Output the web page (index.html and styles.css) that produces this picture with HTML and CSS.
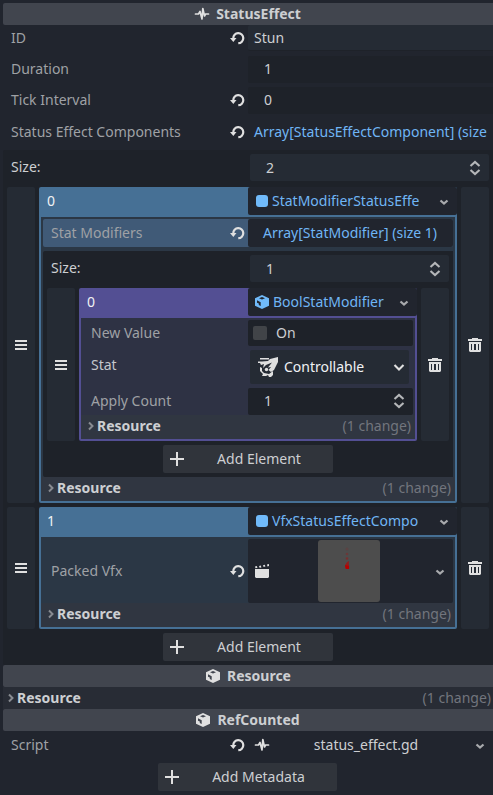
FILE: index.html
```html
<!DOCTYPE html>
<html lang="en">
<head>
<meta charset="utf-8">
<title>Inspector</title>
<link rel="stylesheet" href="styles.css">
</head>
<body>
<svg class="defs" aria-hidden="true">
  <symbol id="pulse" viewBox="0 0 16 16"><path d="M1.500 8H4.500L6 5.500L8 13L8.800 2.500L10.500 10L11.500 8H14.500" fill="none" stroke="currentColor" stroke-width="1.700" stroke-linejoin="round" stroke-linecap="round"/></symbol>
  <symbol id="revert" viewBox="0 0 16 16"><path d="M4.300 8.500A5 5 0 1 1 9.300 13.200" fill="none" stroke="currentColor" stroke-width="2.200"/><path d="M1 8H7.500L4.300 12Z" fill="currentColor"/></symbol>
  <symbol id="updown" viewBox="0 0 16 16"><path d="M3.500 6L8 2L12.500 6M3.500 10L8 14L12.500 10" fill="none" stroke="currentColor" stroke-width="2.100"/></symbol>
  <symbol id="down" viewBox="0 0 16 16"><path d="M4.500 7.500L8 10.500L11.500 7.500" fill="none" stroke="currentColor" stroke-width="2.300"/></symbol>
  <symbol id="bigdown" viewBox="0 0 16 16"><path d="M3.500 6L8 10.500L12.500 6" fill="none" stroke="currentColor" stroke-width="2.100"/></symbol>
  <symbol id="right" viewBox="0 0 8 12"><path d="M2 2.500L5.500 6L2 9.500" fill="none" stroke="currentColor" stroke-width="2"/></symbol>
  <symbol id="grip" viewBox="0 0 16 16"><path d="M2 3H14V5H2ZM2 7H14V9H2ZM2 11H14V13H2Z" fill="currentColor"/></symbol>
  <symbol id="trash" viewBox="0 0 16 16"><path fill="currentColor" fill-rule="evenodd" d="M5 1H11V2H15V4H1V2H5ZM2 5H14V14L13 15H3L2 14ZM4 7V13H5V7ZM7 7V13H9V7ZM11 7V13H12V7Z"/></symbol>
  <symbol id="cube" viewBox="0 0 16 16"><path fill="currentColor" fill-rule="evenodd" d="M8 1L15 4.300V11.700L8 15L1 11.700V4.300ZM8 3L5 4.300L8 5.600L11 4.300ZM3 6.300V8.700L4.800 9.600V11L6.700 12V8.200Z"/></symbol>
  <symbol id="clap" viewBox="0 0 16 16"><path fill="currentColor" d="M1 6H15V14L14 15H2L1 14ZM1 3.500L2.800 3L3.500 4.800L1.500 5.300ZM5 3L6.800 2.600L7.400 4.400L5.600 4.800ZM9 2.200L10.800 1.800L11.400 3.600L9.600 4ZM13 1.500L15 1V3L13.500 3.500Z"/></symbol>
  <symbol id="plus" viewBox="0 0 16 16"><path d="M8 1V15M1 8H15" stroke="currentColor" stroke-width="2"/></symbol>
  <symbol id="control" viewBox="0 0 20 20"><path fill="currentColor" d="M2 1H11V2.600H2ZM0 4.500H4L10 4L12 2L20 0V5L18 9L16 13L13 15L10.500 13L13 10L10 10.500L14 5.500L8 8L5 11L6 7L3 8L2 6H0Z"/><circle cx="8.500" cy="12.500" r="1.700" fill="currentColor"/><path fill="currentColor" d="M2 10L4 11V14L6 16L11 17L15 14V18L13 20H11L10 18L8 19H4L5 17L2 14Z"/></symbol>
</svg>
<main class="inspector">
  <div class="category script-class"><svg class="icon"><use href="#pulse"/></svg>StatusEffect</div>
  <div class="row id-row"><label>ID</label><svg class="icon revert"><use href="#revert"/></svg><div class="value text-field">Stun</div></div>
  <div class="row number-row"><label>Duration</label><div class="value number">1</div></div>
  <div class="row number-row"><label>Tick Interval</label><svg class="icon revert"><use href="#revert"/></svg><div class="value number">0</div></div>
  <div class="row array-row"><label>Status Effect Components</label><svg class="icon revert"><use href="#revert"/></svg><div class="value link">Array[StatusEffectComponent] (size</div></div>

  <section class="array">
    <div class="size"><label>Size:</label><div class="spin">2<svg class="icon"><use href="#updown"/></svg></div></div>
    <div class="element">
      <div class="side"><svg class="icon"><use href="#grip"/></svg></div>
      <div class="item">
        <div class="item-head"><span class="index">0</span><div class="picker"><i class="square"></i>StatModifierStatusEffe<svg class="icon"><use href="#down"/></svg></div></div>
        <div class="item-body">
          <div class="sub-row"><label>Stat Modifiers</label><svg class="icon revert"><use href="#revert"/></svg><div class="array-button">Array[StatModifier] (size 1)</div></div>
          <section class="array nested">
            <div class="size"><label>Size:</label><div class="spin">1<svg class="icon"><use href="#updown"/></svg></div></div>
            <div class="element">
              <div class="side"><svg class="icon"><use href="#grip"/></svg></div>
              <div class="item violet">
                <div class="item-head"><span class="index">0</span><div class="picker"><svg class="icon type"><use href="#cube"/></svg>BoolStatModifier<svg class="icon"><use href="#down"/></svg></div></div>
                <div class="item-body">
                  <div class="prop"><label>New Value</label><div class="check"><i></i>On</div></div>
                  <div class="prop stat"><label>Stat</label><div class="select"><svg class="control"><use href="#control"/></svg>Controllable<svg class="icon"><use href="#bigdown"/></svg></div></div>
                  <div class="prop count"><label>Apply Count</label><div class="spin">1<svg class="icon"><use href="#updown"/></svg></div></div>
                  <div class="fold"><svg><use href="#right"/></svg><b>Resource</b><span>(1 change)</span></div>
                </div>
              </div>
              <div class="side"><svg class="icon"><use href="#trash"/></svg></div>
            </div>
            <div class="add"><svg class="icon"><use href="#plus"/></svg><span>Add Element</span></div>
          </section>
          <div class="fold"><svg><use href="#right"/></svg><b>Resource</b><span>(1 change)</span></div>
        </div>
      </div>
      <div class="side"><svg class="icon"><use href="#trash"/></svg></div>
    </div>
    <div class="element">
      <div class="side"><svg class="icon"><use href="#grip"/></svg></div>
      <div class="item">
        <div class="item-head"><span class="index">1</span><div class="picker"><i class="square"></i>VfxStatusEffectCompo<svg class="icon"><use href="#down"/></svg></div></div>
        <div class="item-body">
          <div class="packed"><label>Packed Vfx</label><svg class="icon revert"><use href="#revert"/></svg>
            <div class="scene"><svg class="icon"><use href="#clap"/></svg>
              <svg class="preview" viewBox="0 0 62 62"><rect width="62" height="62" rx="3" fill="#4d4d4d"/><g fill="#941c1c"><circle cx="29" cy="9" r="1.500" opacity=".2"/><circle cx="29" cy="14" r="1.300" opacity=".4"/><circle cx="29" cy="18.500" r="1.300" opacity=".6"/><path d="M31 21C30 24 32 27 31 29L28 29C26 27 27 23 31 21Z"/></g><path d="M27 25L31 26V29H28Z" fill="#b80000"/></svg>
              <svg class="icon"><use href="#down"/></svg></div></div>
          <div class="fold"><svg><use href="#right"/></svg><b>Resource</b><span>(1 change)</span></div>
        </div>
      </div>
      <div class="side"><svg class="icon"><use href="#trash"/></svg></div>
    </div>
    <div class="add"><svg class="icon"><use href="#plus"/></svg><span>Add Element</span></div>
  </section>

  <div class="category"><svg class="icon"><use href="#cube"/></svg>Resource</div>
  <div class="fold root"><svg><use href="#right"/></svg><b>Resource</b><span>(1 change)</span></div>
  <div class="category script-class"><svg class="icon"><use href="#cube"/></svg>RefCounted</div>
  <div class="row script"><label>Script</label><svg class="icon revert"><use href="#revert"/></svg><div class="value script-value"><svg class="icon"><use href="#pulse"/></svg><span>status_effect.gd</span><svg class="icon dim"><use href="#down"/></svg></div></div>
  <div class="add metadata"><svg class="icon"><use href="#plus"/></svg><span>Add Metadata</span></div>
</main>
</body>
</html>
```

FILE: styles.css
```css
* { box-sizing: border-box; }
body {
  margin: 0;
  width: 493px;
  height: 795px;
  overflow: hidden;
  background: #21252e;
  color: #cdcfd2;
  font: 14px/20px "Noto Sans", sans-serif;
  white-space: nowrap;
}
.defs { position: absolute; width: 0; height: 0; }
.inspector { padding: 3px 0 0 3px; }
.icon { width: 16px; height: 16px; flex: none; color: #e0e0e0; }
label { flex: 1; color: #9fa1a5; }
.revert { margin-right: 3px; }

.category {
  height: 22px;
  display: flex;
  align-items: center;
  justify-content: center;
  gap: 6px;
  background: #41454e;
  border-radius: 2px 0 0 2px;
  font-weight: 700;
}
.script-class { padding-right: 1px; }
.row { display: flex; align-items: center; height: 27px; margin-bottom: 4px; padding-left: 8px; }
.value { width: 245px; height: 27px; padding-left: 6px; line-height: 26px; border-radius: 2px 0 0 2px; }
.id-row { height: 26px; margin-bottom: 5px; }
.number-row label, .size label, .count label { padding-bottom: 1px; line-height: 20px; height: 22px; }
.number-row .icon { margin-bottom: 1px; }
.text-field { height: 26px; background: #252b34; border-bottom: 1px solid #1e2229; }
.number { background: #1e2229; padding-left: 16px; }
.array-row { height: 28px; }
.link { color: #70b5f5; }

.array { background: #1e2229; border-radius: 2px 0 0 2px; padding: 4px; }
.size { height: 27px; margin-bottom: 6px; display: flex; align-items: center; padding-left: 4px; }
.size label { color: #cdcfd2; }
.spin {
  width: 239px;
  height: 27px;
  display: flex;
  align-items: center;
  justify-content: space-between;
  padding: 0 6px 0 16px;
  background: #252b34;
  border-radius: 2px;
}
.spin .icon { color: #b5b7b9; }
.element { display: flex; gap: 4px; margin-bottom: 4px; }
.side { width: 28px; flex: none; display: flex; align-items: center; justify-content: center; background: #252b34; border-radius: 2px; }
.item { --accent: #467095; --body: #2b3745; width: 418px; background: var(--accent); padding-bottom: 2px; border-radius: 2px; }
.item-head { height: 30px; display: flex; }
.index { flex: 1; padding-left: 8px; line-height: 28px; color: #f0f2f4; }
.picker { width: 209px; height: 28px; display: flex; align-items: center; padding: 0 5px 0 8px; background: #21252e; color: #70b5f5; border-radius: 2px; }
.picker > .icon:last-child { margin-left: auto; color: #a8aaad; }
.square { width: 12px; height: 12px; margin-right: 4px; border-radius: 3px; background: #70bafa; }
.item-body { margin: 0 2px; padding-top: 2px; background: var(--body); }
.sub-row { height: 28px; display: flex; align-items: center; margin: 0 2px 4px; padding-left: 8px; background: #405a77; border-radius: 2px; }
.array-button { width: 205px; height: 28px; line-height: 28px; padding-left: 15px; background: #21252e; color: #70b5f5; border-radius: 2px; }
.add {
  width: 170px;
  height: 28px;
  margin: 0 auto;
  display: flex;
  align-items: center;
  padding-left: 6px;
  background: #30343b;
  border-radius: 2px;
}
.add span { flex: 1; text-align: center; }
.fold { height: 24px; display: flex; align-items: center; padding: 0 4px 2px 6px; background: #303641; }
.fold svg { width: 8px; height: 12px; margin-right: 2px; color: #888b91; }
.fold span { margin-left: auto; color: #72757d; }

.nested { margin: 0 2px; }
.nested > .size .spin { width: 199px; }
.violet { --accent: #534f93; --body: #2e3244; width: 338px; }
.violet .picker { width: 169px; padding-left: 6px; }
.picker .type { margin-right: 3px; color: #70bafa; }
.prop { height: 26px; display: flex; align-items: center; margin: 0 2px 4px 10px; }
.check { width: 165px; height: 26px; display: flex; align-items: center; padding-left: 5px; background: #1e2229; border-radius: 2px; }
.check i { width: 14px; height: 14px; margin-right: 9px; border-radius: 2px; background: #414448; }
.stat { height: 34px; }
.stat label { color: #c5c7cc; padding-bottom: 4px; }
.select { width: 159px; height: 34px; margin-right: 4px; display: flex; align-items: center; padding: 0 2px 0 8px; background: #252b34; color: #f0f2f4; border-radius: 2px; }
.select .icon { margin-left: auto; }
.control { width: 20px; height: 20px; margin-right: 6px; color: #e0e0e0; }
.count { height: 27px; margin-bottom: 0; }
.count .spin { width: 165px; padding-bottom: 1px; background: #1e2229; }

.packed { height: 64px; display: flex; align-items: center; margin: 0 2px; padding-left: 8px; }
.scene { width: 205px; height: 64px; display: flex; align-items: center; padding: 0 5px 0 6px; background: #21252e; border-radius: 2px; }
.preview { width: 62px; height: 62px; margin: 0 auto 0 48px; }
.scene .icon:last-child { color: #a8aaad; }

.root { height: 22px; background: #282c35; padding: 0 2px 0 4px; }
.script { height: 28px; }
.script-value { height: 28px; display: flex; align-items: center; padding-right: 5px; }
.script-value span { flex: 1; padding-right: 10px; text-align: center; }
.dim { color: #a8aaad; }
.metadata { width: 179px; margin-left: 155px; }
```
